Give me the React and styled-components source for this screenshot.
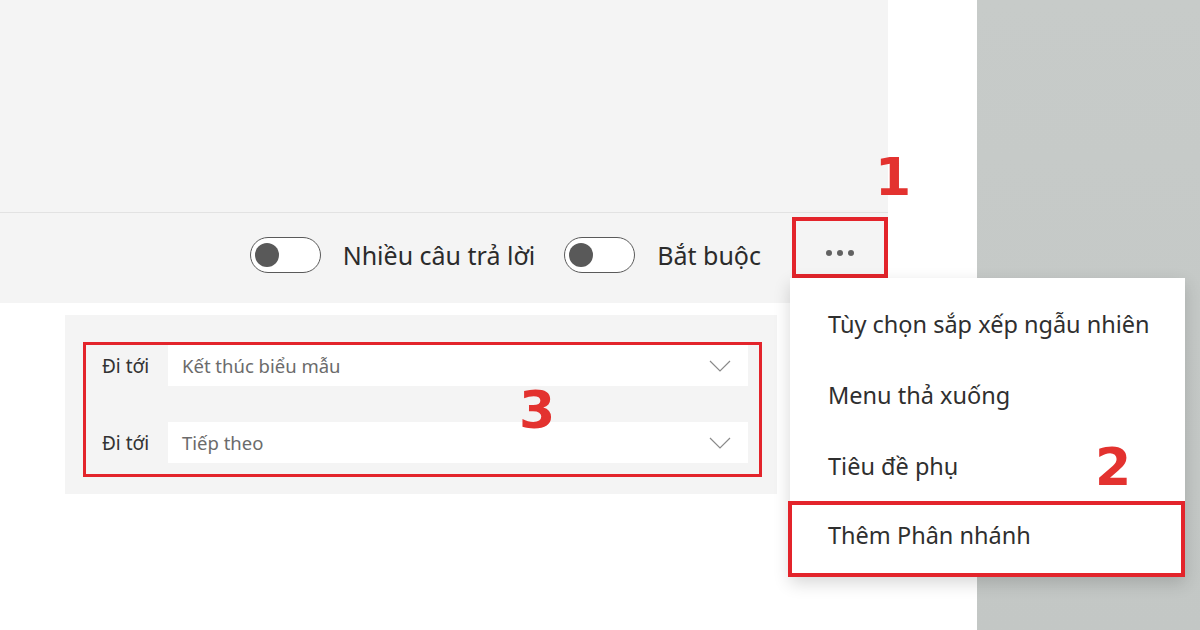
import React from 'react'
import styled, { createGlobalStyle } from 'styled-components';

const GlobalStyle = createGlobalStyle`
    * {
        box-sizing: border-box;
    }
    body {
        margin: 0;
        font-family: "Noto Sans", "Open Sans", sans-serif;
        background: #fff;
    }
`;

const menuItems = [
    "Tùy chọn sắp xếp ngẫu nhiên",
    "Menu thả xuống",
    "Tiêu đề phụ",
    "Thêm Phân nhánh",
];

const branches = ["Kết thúc biểu mẫu", "Tiếp theo"];

function App() {
  return (
    <Page>
        <GlobalStyle />
        <MainColumn>
            <QuestionForm>
                <QuestionBody />
                <Toolbar>
                    <OptionGroup>
                        <Toggle><Knob /></Toggle>
                        <OptionLabel>Nhiều câu trả lời</OptionLabel>
                    </OptionGroup>
                    <OptionGroup>
                        <Toggle><Knob /></Toggle>
                        <OptionLabel>Bắt buộc</OptionLabel>
                    </OptionGroup>
                    <MoreButton>
                        <Dot /><Dot /><Dot />
                    </MoreButton>
                </Toolbar>
            </QuestionForm>
            <BranchCard>
                <BranchBox>
                    {branches.map((target) => (
                        <BranchRow key={target}>
                            <BranchLabel>Đi tới</BranchLabel>
                            <BranchSelect>
                                <SelectText>{target}</SelectText>
                                <svg width="22" height="12" viewBox="0 0 22 12" fill="none">
                                    <path d="M1 1l10 10L21 1" stroke="#8a8a8a" strokeWidth="1.2" />
                                </svg>
                            </BranchSelect>
                        </BranchRow>
                    ))}
                </BranchBox>
            </BranchCard>
        </MainColumn>
        <SidePanel />

        <DropMenu>
            {menuItems.map((item, i) => (
                <MenuItem key={item} $marked={i === menuItems.length - 1}>{item}</MenuItem>
            ))}
        </DropMenu>

        <StepNumber $left={875} $top={151}>1</StepNumber>
        <StepNumber $left={1095} $top={441}>2</StepNumber>
        <StepNumber $left={519} $top={384}>3</StepNumber>
    </Page>
  )
}

const Page = styled.div`
    position: relative;
    display: flex;
    width: 1200px;
    height: 630px;
    overflow: hidden;
`;
const MainColumn = styled.div`
    width: 977px;
    background-color: #fff;
`;
const SidePanel = styled.div`
    flex: 1;
    background: linear-gradient(180deg, #c7cbc9 0%, #c3c7c5 100%);
`;
const QuestionForm = styled.div`
    width: 888px;
    background-color: #f4f4f4;
`;
const QuestionBody = styled.div`
    height: 213px;
    border-bottom: 1px solid #e2e2e2;
`;
const Toolbar = styled.div`
    height: 90px;
    display: flex;
    justify-content: flex-end;
    align-items: center;
    gap: 29px;
`;
const OptionGroup = styled.div`
    display: flex;
    align-items: center;
    gap: 22px;
    margin-top: -6px;
`;
const Toggle = styled.div`
    width: 71px;
    height: 36px;
    border: 1.5px solid #5a5a5a;
    border-radius: 18px;
    background-color: #fff;
    padding: 0 4px;
    display: flex;
    align-items: center;
`;
const Knob = styled.div`
    width: 24px;
    height: 24px;
    border-radius: 50%;
    background-color: #595959;
`;
const OptionLabel = styled.span`
    font-size: 25px;
    color: #2b2b2b;
    line-height: 1;
`;
const MoreButton = styled.div`
    align-self: flex-start;
    margin-top: 4px;
    margin-left: 2px;
    width: 96px;
    height: 61px;
    border: 4px solid #e3242b;
    display: flex;
    justify-content: center;
    align-items: center;
    gap: 5px;
    padding-top: 10px;
`;
const Dot = styled.span`
    width: 6px;
    height: 6px;
    border-radius: 50%;
    background-color: #626262;
`;
const BranchCard = styled.div`
    width: 712px;
    height: 179px;
    margin: 12px 0 0 65px;
    background-color: #f4f4f4;
    padding: 27px 15px 0 18px;
`;
const BranchBox = styled.div`
    width: 679px;
    border: 3px solid #e3242b;
    padding: 0 11px 11px 16px;
    display: flex;
    flex-direction: column;
    gap: 36px;
`;
const BranchRow = styled.div`
    display: flex;
    align-items: center;
`;
const BranchLabel = styled.span`
    width: 66px;
    flex-shrink: 0;
    font-size: 19px;
    color: #333;
`;
const BranchSelect = styled.div`
    flex: 1;
    height: 41px;
    background-color: #fff;
    display: flex;
    align-items: center;
    justify-content: space-between;
    padding: 0 17px 0 14px;
`;
const SelectText = styled.span`
    font-size: 18.5px;
    color: #6b6b6b;
`;
const DropMenu = styled.div`
    position: absolute;
    left: 790px;
    top: 278px;
    width: 395px;
    padding-top: 10px;
    background-color: #fff;
    box-shadow: 0 6px 16px rgba(0, 0, 0, 0.16);
`;
const MenuItem = styled.div`
    height: ${({ $marked }) => ($marked ? '76px' : '71px')};
    display: flex;
    align-items: center;
    padding-left: ${({ $marked }) => ($marked ? '36px' : '38px')};
    padding-bottom: ${({ $marked }) => ($marked ? '8px' : '0')};
    margin-left: ${({ $marked }) => ($marked ? '-2px' : '0')};
    border: ${({ $marked }) => ($marked ? '4px solid #e3242b' : 'none')};
    font-size: 23.5px;
    color: #2f2f2f;
`;
const StepNumber = styled.span`
    position: absolute;
    left: ${({ $left }) => $left}px;
    top: ${({ $top }) => $top}px;
    font-family: "DejaVu Sans", sans-serif;
    font-weight: 700;
    font-size: 52px;
    line-height: 1;
    color: #e3322f;
`;

export default App
